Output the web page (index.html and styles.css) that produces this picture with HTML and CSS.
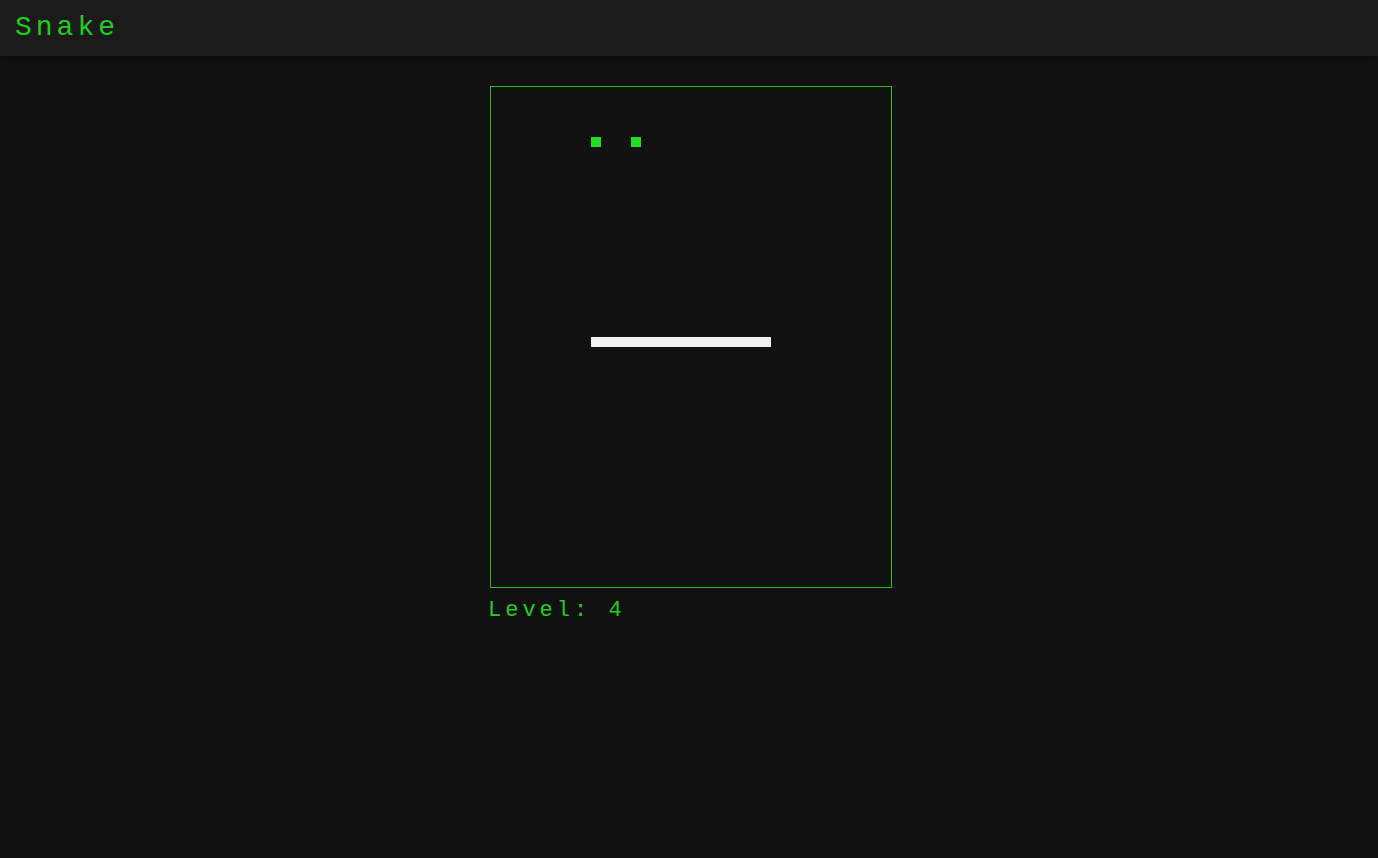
FILE: index.html
```html
<!DOCTYPE html>
<html>
<head>
<meta charset="utf-8">
<title>Snake</title>
<link rel="stylesheet" href="styles.css">
</head>
<body>
<header class="topbar"><h1 class="title">Snake</h1></header>
<main class="stage">
  <div class="game">
    <div class="board">
      <div class="food" style="left:100px;top:50px"></div>
      <div class="food" style="left:140px;top:50px"></div>
      <div class="wall" style="left:100px;top:250px;width:180px"></div>
    </div>
    <div class="level">Level: 4</div>
  </div>
</main>
</body>
</html>
```
FILE: styles.css
```css
html, body {
  margin: 0;
  padding: 0;
  background: #111111;
  height: 100%;
}
body {
  font-family: "Liberation Mono", "DejaVu Sans Mono", monospace;
  color: #22cc22;
}
.topbar {
  height: 56px;
  background: #1b1b1b;
  box-shadow: 0 2px 10px rgba(0,0,0,0.35);
  display: flex;
  align-items: center;
  padding: 0 15px;
}
.title {
  margin: 0;
  font-weight: normal;
  font-size: 28px;
  letter-spacing: 4px;
  color: #22cc22;
  line-height: 1;
}
.stage {
  padding-top: 30px;
  display: flex;
  justify-content: center;
}
.game {
  width: 402px;
  display: flex;
  flex-direction: column;
}
.board {
  position: relative;
  width: 400px;
  height: 500px;
  border: 1px solid #22bb22;
  margin-left: 2px;
}
.food {
  position: absolute;
  width: 10px;
  height: 10px;
  background: #22dd22;
}
.wall {
  position: absolute;
  height: 10px;
  background: #f2f2f2;
}
.level {
  margin-top: 10px;
  font-size: 22px;
  letter-spacing: 4px;
  line-height: 26px;
  color: #22cc22;
}
```
